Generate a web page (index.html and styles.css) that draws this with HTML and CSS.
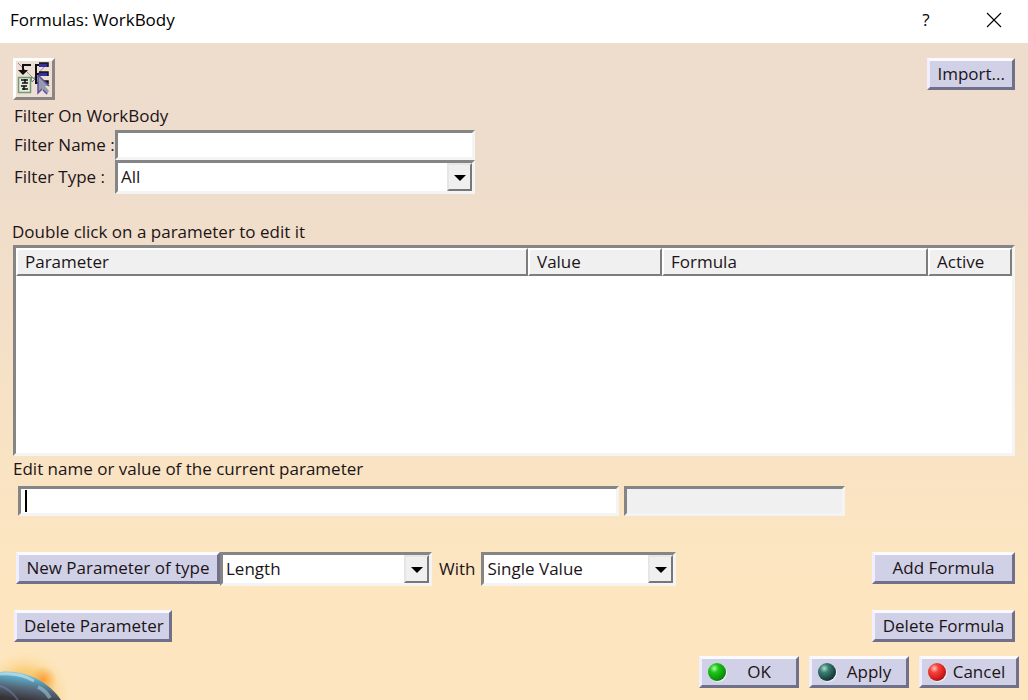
FILE: index.html
```html
<!DOCTYPE html>
<html lang="en">
<head>
    <meta charset="UTF-8">
    <meta name="viewport" content="width=device-width, initial-scale=1.0">
    <title>Formulas: WorkBody</title>
    <link rel="stylesheet" href="styles.css">
</head>
<body>
    <header class="titlebar">
        <h1 class="title">Formulas: WorkBody</h1>
        <button type="button" class="title-btn" aria-label="Help">?</button>
        <button type="button" class="title-btn" aria-label="Close">
            <svg width="16" height="16" viewBox="0 0 16 16"><path d="M1 1l14 14M15 1L1 15" stroke="#000" stroke-width="1.1" fill="none"/></svg>
        </button>
    </header>
    <form class="dialog">
        <div class="row toolbar">
            <button type="button" class="icon-btn" aria-label="Filter">
                <svg width="34" height="34" viewBox="0 0 34 34" fill="none">
                    <path d="M1 1l18 18M30 2L15 18" stroke="#8c8c8c" stroke-width="1"/>
                    <path d="M14 3H6v6" stroke="#111" stroke-width="2"/>
                    <path d="M1 8h10l-5 5z" fill="#111"/>
                    <path d="M24 3h-5v18h4M19 12h5" stroke="#111" stroke-width="2"/>
                    <path d="M22 1h9v4h-9zM22 10h9v4h-9zM24 19h7v3h-7z" fill="#39309c"/>
                    <path d="M22 1h9v4M22 10h9v4M26 19h5v3" stroke="#111" stroke-width="1.5"/>
                    <path d="M14 15l4 2-3 3z" fill="#eee" stroke="#777"/>
                    <path d="M1.500 15.500h12v15h-12z" fill="#e5eadf" stroke="#719b70" stroke-width="1.500"/>
                    <path d="M4 18h7M5 21h6M4 24h6M5 27h6M8 17v4M7 24v4" stroke="#111" stroke-width="1.500"/>
                    <path d="M21 13v18l4-4 5 5 2-3-4-5h5z" fill="#969aab"/>
                    <path d="M21 13v18l4-4M21 13l11 11M26 28l4 4" stroke="#5951a4" stroke-width="1.500"/>
                </svg>
            </button>
            <button type="button" class="btn">Import...</button>
        </div>
        <div class="filters">
            <p class="filter-title">Filter On WorkBody</p>
            <label for="filter-name">Filter Name :</label>
            <input type="text" id="filter-name" class="field">
            <label for="filter-type">Filter Type :</label>
            <div class="combo">
                <select id="filter-type"><option>All</option></select>
            </div>
        </div>
        <p class="caption">Double click on a parameter to edit it</p>
        <div class="list">
            <table class="params">
                <thead>
                    <tr>
                        <th>Parameter</th>
                        <th class="col-value">Value</th>
                        <th class="col-formula">Formula</th>
                        <th class="col-active">Active</th>
                    </tr>
                </thead>
                <tbody></tbody>
            </table>
        </div>
        <label class="caption edit-caption" for="edit-name">Edit name or value of the current parameter</label>
        <div class="row edit-row">
            <input type="text" id="edit-name" class="field edit-name">
            <input type="text" class="field edit-value" aria-label="Value" disabled>
        </div>
        <div class="row new-row">
            <button type="button" class="btn btn-new">New Parameter of type</button>
            <div class="combo combo-type">
                <select aria-label="Type"><option>Length</option></select>
            </div>
            <label class="with" for="with">With</label>
            <div class="combo combo-with">
                <select id="with"><option>Single Value</option></select>
            </div>
            <button type="button" class="btn btn-formula">Add Formula</button>
        </div>
        <div class="row delete-row">
            <button type="button" class="btn btn-delete">Delete Parameter</button>
            <button type="button" class="btn btn-formula">Delete Formula</button>
        </div>
        <div class="footer">
            <button type="submit" class="btn btn-action"><span class="ball green"></span><span class="text">OK</span></button>
            <button type="button" class="btn btn-action"><span class="ball teal"></span><span class="text">Apply</span></button>
            <button type="button" class="btn btn-action"><span class="ball red"></span><span class="text">Cancel</span></button>
        </div>
        <svg class="planet" width="90" height="60" viewBox="0 0 90 60">
            <defs>
                <radialGradient id="glow">
                    <stop offset="0" stop-color="#f5b33e"/>
                    <stop offset=".5" stop-color="#f7c768" stop-opacity=".8"/>
                    <stop offset="1" stop-color="#fde6bf" stop-opacity="0"/>
                </radialGradient>
                <radialGradient id="sun">
                    <stop offset="0" stop-color="#ff9a35"/>
                    <stop offset="1" stop-color="#f9b24d" stop-opacity="0"/>
                </radialGradient>
                <linearGradient id="globe" x1=".65" y1="0" x2=".35" y2="1">
                    <stop offset="0" stop-color="#b9e6f0"/>
                    <stop offset=".3" stop-color="#5aa6c4"/>
                    <stop offset=".6" stop-color="#56697a"/>
                    <stop offset="1" stop-color="#363238"/>
                </linearGradient>
            </defs>
            <ellipse cx="25" cy="54" rx="48" ry="46" fill="url(#glow)"/>
            <circle cx="43" cy="40" r="14" fill="url(#sun)"/>
            <path d="M0 32c24-3 48 9 61 28H0z" fill="url(#globe)"/>
            <path d="M0 34c13-1 24 1 34 7" stroke="#e4f2f4" stroke-opacity=".5" stroke-width="3" fill="none"/>
            <path d="M38 47c5 2 9 6 12 11" stroke="#a4dcec" stroke-opacity=".5" stroke-width="4" fill="none"/>
            <path d="M0 46c7 2 13 7 18 14" stroke="#8596c6" stroke-opacity=".4" stroke-width="2" fill="none"/>
        </svg>
    </form>
</body>
</html>
```
FILE: styles.css
```css
*, *::before, *::after {
    box-sizing: border-box;
}

body {
    margin: 0;
    min-height: 100vh;
    display: flex;
    flex-direction: column;
    font-family: "Open Sans", "Noto Sans", sans-serif;
    font-size: 17px;
    line-height: 24px;
    color: #1c1418;
}

p {
    margin: 0;
}

button, input, select {
    font: inherit;
    color: inherit;
    margin: 0;
}

.titlebar {
    display: flex;
    align-items: flex-start;
    height: 43px;
    padding: 8px 0 0 10px;
    background: #fff;
    color: #000;
}

.title {
    flex: 1;
    margin: 0;
    font-size: 17px;
    font-weight: 400;
}

.title-btn {
    display: flex;
    align-items: center;
    justify-content: center;
    width: 68px;
    height: 24px;
    padding: 0;
    border: 0;
    background: none;
}

.dialog {
    position: relative;
    flex: 1;
    display: flex;
    flex-direction: column;
    padding: 15px 13px 12px;
    background: linear-gradient(#eedccc 0, #eedccc 18%, #fde6bf 85%);
    overflow: hidden;
}

.row {
    display: flex;
    justify-content: space-between;
    align-items: flex-start;
}

.btn {
    height: 32px;
    padding: 0 7px;
    border: 3px solid;
    border-color: #fbfaff #71708a #71708a #f0eeff;
    background: #d0d0e6;
    line-height: 24px;
    white-space: nowrap;
}

.icon-btn {
    width: 42px;
    height: 42px;
    padding: 1px;
    border: 3px solid;
    border-color: #fff #8c8583 #8c8583 #fff;
    background: #eedfd4;
}

.icon-btn svg {
    display: block;
}

.filters {
    display: grid;
    grid-template-columns: 102px minmax(0, 360px);
    align-items: center;
    margin-top: 4px;
}

.filter-title {
    grid-column: 1 / 3;
    height: 26px;
}

.filters label, .filter-title {
    padding-left: 1px;
    white-space: nowrap;
}

.field, .combo {
    height: 30px;
    min-width: 0;
    border: 3px solid;
    border-color: #858585 #f4f4f4 #f4f4f4 #858585;
    border-radius: 0;
    background: #fff;
}

.field {
    padding: 0 5px;
    outline: 0;
}

.combo {
    position: relative;
    height: 34px;
}

.combo select {
    display: block;
    width: 100%;
    height: 28px;
    padding: 0 28px 0 3px;
    border: 0;
    border-radius: 0;
    background: none;
    appearance: none;
}

/* raised arrow button over the right end of the select */
.combo::after {
    content: "";
    position: absolute;
    top: 0;
    right: 0;
    width: 25px;
    height: 28px;
    border: 2px solid;
    border-color: #e6e6e6 #777 #777 #e6e6e6;
    background: #f0f0f0;
    pointer-events: none;
}

.combo::before {
    content: "";
    position: absolute;
    z-index: 1;
    top: 12px;
    right: 6px;
    border: 6px solid transparent;
    border-top-color: #000;
    border-bottom: 0;
    pointer-events: none;
}

.caption {
    margin-top: 26px;
    margin-left: -1px;
}

.list {
    flex: 1;
    min-height: 120px;
    margin-top: 1px;
    border: 3px solid;
    border-color: #858585 #f4f4f4 #f4f4f4 #858585;
    background: #fff;
}

.params {
    width: 100%;
    border-collapse: separate;
    border-spacing: 0;
    table-layout: fixed;
}

.params th {
    height: 28px;
    padding: 0 7px;
    border: 2px solid;
    border-color: #fff #7d7d7d #7d7d7d #fff;
    background: #f0f0f0;
    font-weight: 400;
    text-align: left;
}

.col-value {
    width: 134px;
}

.col-formula {
    width: 266px;
}

.col-active {
    width: 84px;
}

.edit-caption {
    margin-top: 1px;
    margin-left: 0;
}

.edit-row {
    justify-content: flex-start;
    gap: 5px;
    margin-top: 5px;
    padding-left: 5px;
}

.edit-name {
    flex: 0 1 601px;
    background: linear-gradient(#000, #000) 4px 1px / 2px 22px no-repeat #fff;
}

.edit-value {
    flex: 0 1 221px;
    background: #f0f0f0;
}

.new-row {
    justify-content: flex-start;
    margin-top: 36px;
    padding-left: 3px;
}

.btn-new {
    width: 204px;
}

.combo-type {
    flex: 0 1 212px;
}

.with {
    padding: 5px 6px 0 7px;
}

.combo-with {
    flex: 0 1 195px;
}

.btn-formula {
    width: 143px;
    margin-left: auto;
}

.delete-row {
    margin-top: 24px;
    padding-left: 1px;
}

.btn-delete {
    width: 158px;
}

.footer {
    display: flex;
    justify-content: flex-end;
    gap: 10px;
    margin: 14px -4px 0 0;
}

.btn-action {
    display: flex;
    align-items: center;
    width: 100px;
    padding: 0 4px 0 6px;
}

.btn-action .text {
    flex: 1;
    text-align: center;
}

.ball {
    width: 18px;
    height: 18px;
    border-radius: 50%;
    box-shadow: 1px 1px 1px #f4f2fa;
}

.green {
    background: radial-gradient(circle at 35% 30%, #b4ffa8 0, #1fc51a 25%, #0b9a0b 60%, #064d06 100%);
}

.teal {
    background: radial-gradient(circle at 35% 30%, #b0ddd0 0, #3d7f72 25%, #1c4845 60%, #071817 100%);
}

.red {
    background: radial-gradient(circle at 35% 30%, #ffc9c0 0, #f5433a 25%, #d41d1a 60%, #3d0d0d 100%);
}

.planet {
    position: absolute;
    left: 0;
    bottom: 0;
    pointer-events: none;
}
```
